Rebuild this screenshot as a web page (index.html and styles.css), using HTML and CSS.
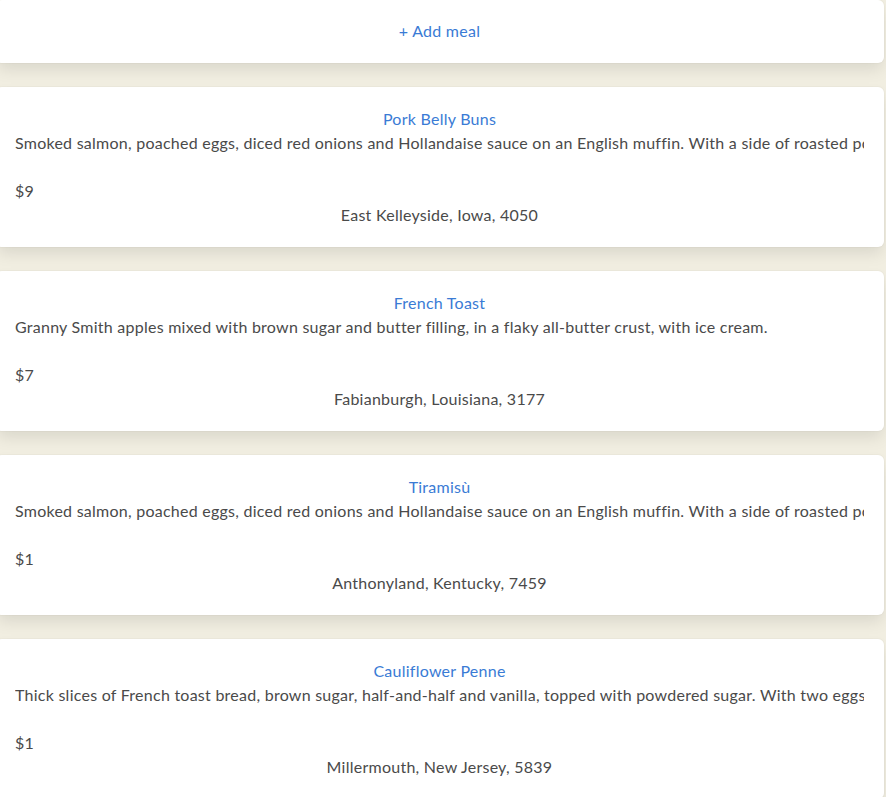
FILE: index.html
```html
<!DOCTYPE html>
<html lang="en">
<head>
<meta charset="utf-8">
<title>Meals</title>
<link rel="stylesheet" href="styles.css">
</head>
<body>
<main class="list">
  <section class="card add-card">
    <a class="link" href="#">+ Add meal</a>
  </section>

  <section class="card meal">
    <div class="title">Pork Belly Buns</div>
    <p class="desc">Smoked salmon, poached eggs, diced red onions and Hollandaise sauce on an English muffin. With a side of roasted potatoes.</p>
    <p class="price">$9</p>
    <div class="addr">East Kelleyside, Iowa, 4050</div>
  </section>

  <section class="card meal">
    <div class="title">French Toast</div>
    <p class="desc">Granny Smith apples mixed with brown sugar and butter filling, in a flaky all-butter crust, with ice cream.</p>
    <p class="price">$7</p>
    <div class="addr">Fabianburgh, Louisiana, 3177</div>
  </section>

  <section class="card meal">
    <div class="title">Tiramisù</div>
    <p class="desc">Smoked salmon, poached eggs, diced red onions and Hollandaise sauce on an English muffin. With a side of roasted potatoes.</p>
    <p class="price">$1</p>
    <div class="addr">Anthonyland, Kentucky, 7459</div>
  </section>

  <section class="card meal">
    <div class="title">Cauliflower Penne</div>
    <p class="desc">Thick slices of French toast bread, brown sugar, half-and-half and vanilla, topped with powdered sugar. With two eggs served any style.</p>
    <p class="price">$1</p>
    <div class="addr">Millermouth, New Jersey, 5839</div>
  </section>
</main>
</body>
</html>
```
FILE: styles.css
```css
html, body {
  margin: 0;
  padding: 0;
  background: #f1eee1;
  overflow: hidden;
}
body {
  font-family: "Lato", "Noto Sans", sans-serif;
  font-size: 16px;
  line-height: 24px;
  letter-spacing: 0.25px;
  color: #4a4a4a;
}
.list {
  display: flex;
  flex-direction: column;
  gap: 24px;
  width: 888px;
  margin-left: -4px;
}
.card {
  background: #fff;
  border-radius: 6px;
  box-shadow: 0 8px 16px -2px rgba(10, 10, 10, 0.1), 0 0 0 1px rgba(10, 10, 10, 0.02);
  padding: 20px 20px 20px 19px;
  overflow: hidden;
}
.add-card {
  height: 63px;
  box-sizing: border-box;
  display: flex;
  align-items: center;
  justify-content: center;
  padding-top: 0;
  padding-bottom: 2px;
}
.link, .title {
  color: #3a7bd5;
  text-decoration: none;
}
.title, .addr {
  text-align: center;
}
.desc {
  margin: 0 0 24px;
  white-space: nowrap;
  overflow: hidden;
}
.price {
  margin: 0;
}
```
